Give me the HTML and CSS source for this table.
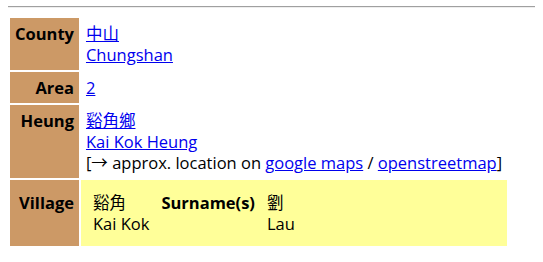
FILE: index.html
```html
<!DOCTYPE html>
<html>
<head>
<meta charset="utf-8">
<link rel="stylesheet" href="styles.css">
</head>
<body>
<span class="stub"></span>
<hr class="rule">
<table class="info">
  <tr>
    <th class="label">County</th>
    <td class="value"><a href="#">中山</a><br><a href="#">Chungshan</a></td>
  </tr>
  <tr>
    <th class="label">Area</th>
    <td class="value"><a href="#">2</a></td>
  </tr>
  <tr>
    <th class="label">Heung</th>
    <td class="value"><a href="#">谿角鄉</a><br><a href="#">Kai Kok Heung</a><br>[→ approx. location on <a href="#">google maps</a> / <a href="#">openstreetmap</a>]</td>
  </tr>
  <tr>
    <th class="label label-village">Village</th>
    <td class="value village">
      <table class="inner">
        <tr>
          <td class="cell">谿角<br>Kai Kok</td>
          <th class="cell">Surname(s)</th>
          <td class="cell">劉<br>Lau</td>
        </tr>
      </table>
    </td>
  </tr>
</table>
</body>
</html>
```

FILE: styles.css
```css
html, body {
  background: #ffffff;
}
body {
  margin: 0 8px;
  font-family: "Open Sans", "Noto Sans CJK TC", sans-serif;
  font-size: 16.5px;
  line-height: 21px;
  color: #000;
}
.stub {
  display: block;
  width: 2px;
  height: 1px;
  margin: 2px 0 0 -8px;
  background: #0000ee;
}
.rule {
  margin: 3px -8px 8px 0;
  height: 0;
  border: 0;
  border-top: 1px solid #a0a0a0;
  border-bottom: 1px solid #eeeeee;
}
.info {
  border-collapse: separate;
  border-spacing: 2px;
}
.label {
  background: #cc9966;
  text-align: right;
  vertical-align: top;
  padding: 5px;
  font-weight: bold;
}
.label-village {
  padding-top: 12px;
}
.value {
  vertical-align: top;
  padding: 5px;
  text-align: left;
}
a {
  color: #0000ee;
}
.village {
  background: #ffff99;
}
.inner {
  border-collapse: separate;
  border-spacing: 2px;
}
.cell {
  padding: 5px;
  vertical-align: top;
  text-align: left;
}
th.cell {
  font-weight: bold;
}
```
